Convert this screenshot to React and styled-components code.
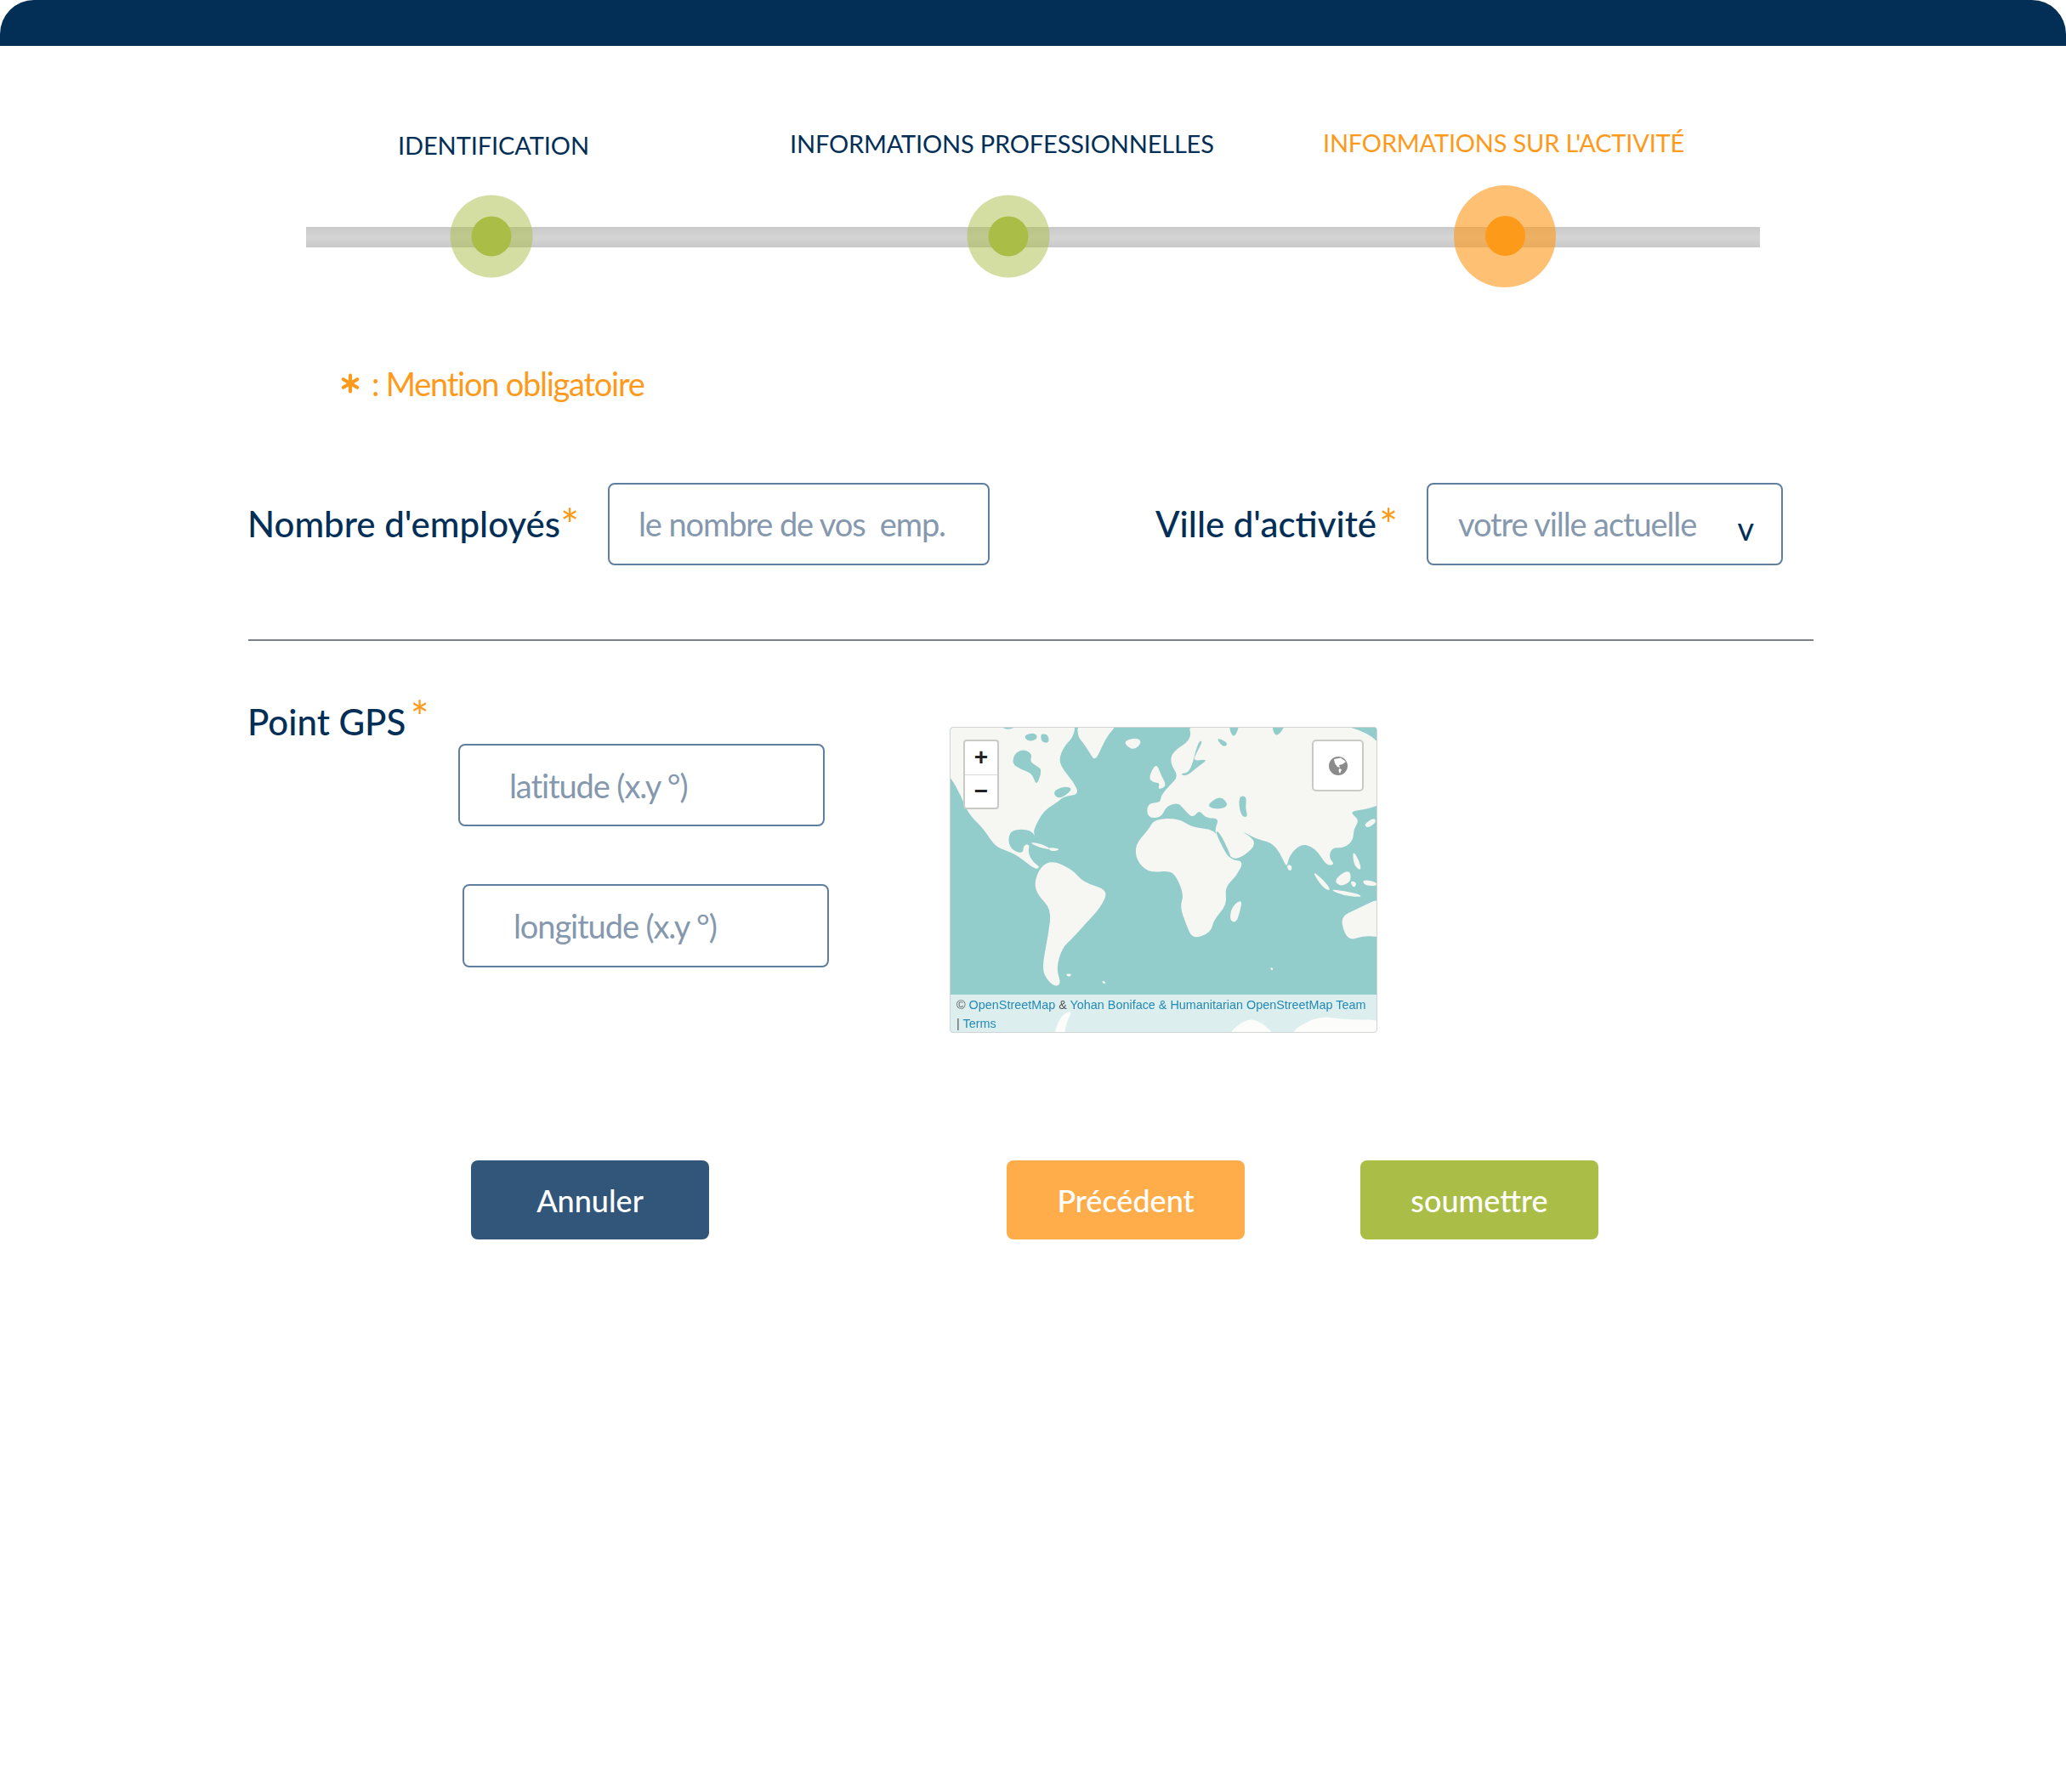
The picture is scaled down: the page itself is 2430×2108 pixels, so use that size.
import React from 'react';
import styled, { createGlobalStyle } from 'styled-components';
import { Asterisk } from 'lucide-react';

const FONT = '"Lato", "Noto Sans", sans-serif';

const Global = createGlobalStyle`
  html, body { margin: 0; padding: 0; background: #fff; }
  * { box-sizing: border-box; }
`;

const Page = styled.div`
  width: 2430px;
  height: 2108px;
  overflow: hidden;
  background: #fff;
  font-family: ${FONT};
  color: #032f57;
`;

const TopBar = styled.header`
  height: 54px;
  background: #032f57;
  border-radius: 40px 40px 0 0;
`;

const StepLabels = styled.div`
  display: flex;
  align-items: flex-start;
  height: 163px;
  padding-top: 97px;
`;

const StepLabel = styled.div`
  margin-left: ${p => p.$left}px;
  margin-top: ${p => p.$top}px;
  width: ${p => p.$width}px;
  font-size: 29px;
  line-height: 36px;
  white-space: nowrap;
  letter-spacing: ${p => p.$spacing}px;
  color: ${p => (p.$active ? '#fd9a1c' : '#032f57')};
`;

const Track = styled.div`
  position: relative;
  margin: 50px 0 0 360px;
  width: 1710px;
  height: 24px;
  background: linear-gradient(180deg, #c9c9c9 0%, #d5d5d5 50%, #c9c9c9 100%);
`;

const Halo = styled.div`
  position: absolute;
  top: 10.5px;
  left: ${p => p.$center}px;
  width: ${p => p.$size}px;
  height: ${p => p.$size}px;
  transform: translate(-50%, -50%);
  border-radius: 50%;
  background: ${p => (p.$active ? 'rgba(253,154,28,.62)' : 'rgba(170,189,70,.5)')};
  display: flex;
  align-items: center;
  justify-content: center;
`;

const Core = styled.div`
  width: 47px;
  height: 47px;
  border-radius: 50%;
  background: ${p => (p.$active ? '#fd9a1a' : '#aabd46')};
`;

const Mandatory = styled.p`
  display: flex;
  align-items: center;
  margin: 138px 0 0 393px;
  height: 44px;
  font-size: 38px;
  line-height: 44px;
  color: #fd9a1c;
  letter-spacing: -1.25px;
  svg { margin-right: 6px; }
`;

const FieldRow = styled.div`
  display: flex;
  align-items: center;
  margin: 94px 0 0 291px;
  height: 98px;
`;

const FieldLabel = styled.label`
  display: block;
  flex: none;
  width: ${p => p.$width}px;
  margin-left: ${p => p.$left || 0}px;
  font-size: 42px;
  font-weight: 500;
  line-height: 50px;
  white-space: nowrap;
  color: #032f57;
`;

const Star = styled.span`
  color: #fd9a1c;
  font-size: 52px;
  line-height: 0;
  font-weight: 400;
  margin-left: ${p => p.$gap || 0}px;
  vertical-align: ${p => p.$rise ?? -5}px;
`;

const Field = styled.div`
  display: flex;
  align-items: center;
  justify-content: space-between;
  flex: none;
  width: ${p => p.$width}px;
  height: ${p => p.$height || 97}px;
  margin-left: ${p => p.$left || 0}px;
  margin-top: ${p => p.$top || 0}px;
  padding-left: ${p => p.$pad}px;
  padding-right: 33px;
  border: 2px solid #5f7f9f;
  border-radius: 8px;
  background: #fff;
  font-size: 38px;
  letter-spacing: -1.1px;
  color: #8598ae;
  white-space: pre;
`;

const Caret = styled.span`
  color: #032f57;
  font-size: 38px;
  font-weight: 400;
  line-height: 1;
  margin-top: 10px;
`;

const Divider = styled.hr`
  margin: 87px 0 0 292px;
  width: 1841px;
  height: 2px;
  border: 0;
  background: #7c7f84;
`;

const GpsRow = styled.section`
  display: flex;
  align-items: flex-start;
  margin: 56px 0 0 291px;
`;

const GpsColumn = styled.div`
  width: 826px;
  flex: none;
`;

const GpsTitle = styled.h2`
  margin: 12px 0 -2px;
  height: 55px;
  font-size: 42px;
  font-weight: 500;
  line-height: 55px;
  color: #032f57;
`;

const MapBox = styled.div`
  position: relative;
  width: 503px;
  height: 360px;
  margin-top: 45px;
  border: 1px solid #d2d4d4;
  border-radius: 4px;
  overflow: hidden;
  background: #92cccb;
  filter: blur(0.7px);
`;

const MapArt = styled.svg`
  display: block;
  width: 100%;
  height: 100%;
`;

const ZoomControl = styled.div`
  position: absolute;
  left: 15px;
  top: 14px;
  width: 42px;
  height: 82px;
  display: flex;
  flex-direction: column;
  background: #fff;
  border: 2px solid #c9c9c6;
  border-radius: 4px;
`;

const ZoomBtn = styled.div`
  flex: 1;
  display: flex;
  align-items: center;
  justify-content: center;
  font-family: "Liberation Sans", sans-serif;
  font-weight: 700;
  font-size: 28px;
  line-height: 1;
  color: #222;
  & + & { border-top: 1px solid #d8d8d8; }
`;

const GlobeBtn = styled.div`
  position: absolute;
  right: 15px;
  top: 14px;
  width: 61px;
  height: 61px;
  display: flex;
  align-items: center;
  justify-content: center;
  background: #fff;
  border: 2px solid #c9c9c6;
  border-radius: 5px;
`;

const Attribution = styled.div`
  position: absolute;
  left: 0;
  right: 0;
  bottom: 0;
  height: 44px;
  padding: 1px 6px 0 7px;
  background: rgba(255, 255, 255, .68);
  font-family: "Liberation Sans", sans-serif;
  font-size: 14.4px;
  line-height: 22px;
  white-space: nowrap;
  color: #555;
`;

const AttrLink = styled.span`
  color: #2489b5;
`;

const Actions = styled.div`
  display: flex;
  margin: 150px 0 0 554px;
`;

const ActionBtn = styled.button`
  width: 280px;
  height: 93px;
  margin-left: ${p => p.$left || 0}px;
  border: 0;
  border-radius: 8px;
  background: ${p => p.$bg};
  color: #fff;
  font-family: ${FONT};
  font-size: 36px;
  font-weight: 500;
`;

const LAND = [
  // North America
  '20 20 205 20 240 58 300 30 400 30 480 30 470 80 440 110 420 160 440 200 470 235 492 282 440 288 415 310 370 340 340 395 334 420 346 442 328 410 290 405 255 412 247 450 262 480 298 492 300 462 322 458 315 490 335 525 358 540 340 548 300 515 265 490 210 470 185 440 160 400 110 350 85 285 50 220 20 200',
  // Greenland
  '485 30 625 30 590 70 570 110 545 165 525 130 505 100 486 75',
  // Iceland
  '645 92 690 80 706 98 680 124 655 112',
  // UK / Ireland
  '728 222 755 168 772 215 792 252 760 266 768 240 745 240',
  // South America
  '336 598 358 538 400 516 470 550 505 595 592 620 565 682 515 738 468 792 432 828 412 900 430 955 405 964 370 925 366 880 385 780 396 690 350 640',
  // Africa
  '682 460 730 405 748 370 830 366 880 400 958 406 985 470 1010 514 1056 518 1030 572 990 612 998 672 952 728 942 772 880 796 858 745 836 680 850 640 825 574 800 552 730 560 688 518',
  // Eurasia
  '860 20 1540 20 1540 310 1480 335 1415 342 1452 372 1432 405 1430 445 1400 472 1358 470 1346 505 1368 530 1340 535 1312 490 1285 465 1250 458 1210 500 1203 545 1180 490 1150 452 1095 440 1040 406 1104 452 1055 502 1012 514 975 450 953 412 972 366 925 366 902 336 880 368 845 328 830 312 790 322 772 366 724 364 724 314 770 310 770 288 800 250 832 218 803 172 810 130 880 85',
  // Madagascar
  '1050 652 1042 700 1028 738 1006 728 1014 680',
  // Australia
  '1388 715 1440 690 1540 640 1540 790 1470 782 1420 800 1398 770',
  // Borneo / Indonesia
  '1363 584 1417 545 1425 590 1385 610',
  '1286 550 1332 588 1356 626 1326 614',
  '1346 618 1400 624 1456 638 1456 646 1400 642',
  '1428 478 1452 518 1458 554 1432 534',
  '1418 588 1444 594 1432 616',
  '1462 584 1510 592 1510 608 1468 604',
  // Japan
  '1466 388 1502 364 1510 380 1480 402',
  // Sri Lanka
  '1203 530 1221 535 1218 554 1206 550',
  // Cuba & Hispaniola
  '316 450 365 458 398 478 358 472',
  '382 468 432 476 395 486',
  // Small islands
  '443 918 467 918 456 932',
  '568 940 584 950 574 956',
  '1145 895 1158 900 1150 908',
  // Antarctica under the attribution
  '400 1150 425 1068 470 1046 445 1095 440 1150',
  '985 1150 1060 1076 1115 1088 1175 1150',
  '1185 1150 1300 1066 1400 1082 1540 1080 1540 1150',
];

const SEA = [
  // Hudson Bay
  '260 172 272 132 305 122 330 140 322 165 346 182 364 195 346 250 335 225 325 205 290 192',
  // Arctic channels
  '300 72 340 62 350 85 315 95',
  '358 66 385 70 388 100 362 96',
  // Gulf of St Lawrence
  '398 272 440 252 472 262 422 302',
  // Baltic
  '872 205 898 95 916 90 892 135 882 165 936 155 888 192 858 218 835 208',
  // Black Sea
  '925 322 975 285 1006 322 965 336',
  // Caspian
  '1036 288 1066 288 1060 330 1070 364 1044 358',
  // Red Sea
  '955 410 974 418 1016 510 996 498',
  // Arctic notches
  '958 78 1004 100 985 116',
  '1000 30 1044 30 1020 88',
  '1148 30 1204 30 1165 84',
];

const smooth = (list) => {
  const n = list.split(' ').map(Number);
  const pts = [];
  for (let i = 0; i < n.length; i += 2) pts.push([n[i], n[i + 1]]);
  const mid = (a, b) => [(a[0] + b[0]) / 2, (a[1] + b[1]) / 2];
  const start = mid(pts[pts.length - 1], pts[0]);
  let d = `M${start[0]} ${start[1]}`;
  pts.forEach((p, i) => {
    const m = mid(p, pts[(i + 1) % pts.length]);
    d += ` Q${p[0]} ${p[1]} ${m[0]} ${m[1]}`;
  });
  return d + ' Z';
};

function WorldMap() {
  return (
    <MapArt viewBox="50 45 1460 1080" preserveAspectRatio="none">
      <rect x="50" y="45" width="1460" height="1080" fill="#92cccb" />
      {LAND.map((d, i) => <path key={i} d={smooth(d)} fill="#f6f6f2" />)}
      {SEA.map((d, i) => <path key={i} d={smooth(d)} fill="#92cccb" />)}
    </MapArt>
  );
}

function GlobeIcon() {
  return (
    <svg width="24" height="24" viewBox="0 0 24 24" aria-hidden="true">
      <circle cx="12" cy="12" r="11" fill="#8b8b8b" />
      <path d="M7 4 L15 2.5 L21 7 L17 10 L13 11 L14 14 L11 13 L8 9 Z M13 15 L16 16 L14 21 L12.5 18 Z" fill="#fff" />
    </svg>
  );
}

export default function App() {
  return (
    <Page>
      <Global />
      <TopBar />
      <StepLabels>
        <StepLabel $left={468} $top={2} $width={222} $spacing={-0.1}>IDENTIFICATION</StepLabel>
        <StepLabel $left={239} $top={0} $width={497} $spacing={-0.18}>INFORMATIONS PROFESSIONNELLES</StepLabel>
        <StepLabel $left={130} $top={-1} $width={424} $spacing={-0.2} $active>INFORMATIONS SUR L'ACTIVITÉ</StepLabel>
      </StepLabels>
      <Track>
        <Halo $center={217.5} $size={97}><Core /></Halo>
        <Halo $center={826} $size={97}><Core /></Halo>
        <Halo $center={1410} $size={120} $active><Core $active /></Halo>
      </Track>
      <Mandatory><Asterisk size={38} strokeWidth={2.6} /> : Mention obligatoire</Mandatory>
      <FieldRow>
        <FieldLabel $width={424}>Nombre d'employés<Star>*</Star></FieldLabel>
        <Field $width={449} $pad={34}>le nombre de vos  emp.</Field>
        <FieldLabel $width={319} $left={195}>Ville d'activité<Star $gap={3}>*</Star></FieldLabel>
        <Field $width={419} $pad={35}>votre ville actuelle<Caret>v</Caret></Field>
      </FieldRow>
      <Divider />
      <GpsRow>
        <GpsColumn>
          <GpsTitle>Point GPS<Star $gap={5} $rise={2}>*</Star></GpsTitle>
          <Field $width={431} $left={248} $pad={58}>latitude (x.y °)</Field>
          <Field $width={431} $left={253} $top={68} $height={98} $pad={58}>longitude (x.y °)</Field>
        </GpsColumn>
        <MapBox>
          <WorldMap />
          <ZoomControl>
            <ZoomBtn>+</ZoomBtn>
            <ZoomBtn>−</ZoomBtn>
          </ZoomControl>
          <GlobeBtn><GlobeIcon /></GlobeBtn>
          <Attribution>
            © <AttrLink>OpenStreetMap</AttrLink> &amp; <AttrLink>Yohan Boniface &amp; Humanitarian OpenStreetMap Team</AttrLink><br />| <AttrLink>Terms</AttrLink>
          </Attribution>
        </MapBox>
      </GpsRow>
      <Actions>
        <ActionBtn $bg="#32567a">Annuler</ActionBtn>
        <ActionBtn $bg="#ffad4a" $left={350}>Précédent</ActionBtn>
        <ActionBtn $bg="#aabd46" $left={136}>soumettre</ActionBtn>
      </Actions>
    </Page>
  );
}
